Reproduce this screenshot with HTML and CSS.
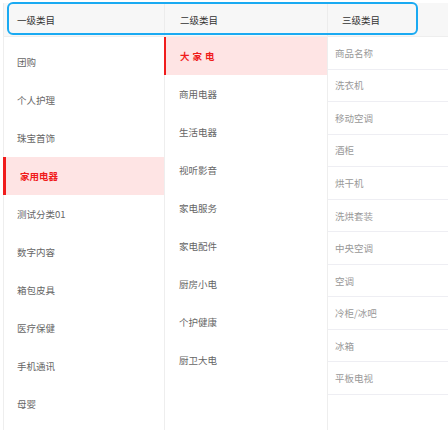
FILE: index.html
```html
<!DOCTYPE html>
<html lang="zh-CN">

<head>
  <meta charset="UTF-8">
  <meta name="viewport" content="width=device-width, initial-scale=1.0">
  <title>类目选择</title>
  <link rel="stylesheet" href="styles.css">
</head>

<body>
  <div class="picker">
    <div class="picker-head">
      <div class="head-cell first">一级类目</div>
      <div class="head-cell second">二级类目</div>
      <div class="head-cell third">三级类目</div>
    </div>

    <div class="picker-body">
      <ul class="col col-first">
        <li class="item">团购</li>
        <li class="item">个人护理</li>
        <li class="item">珠宝首饰</li>
        <li class="item active">家用电器</li>
        <li class="item">测试分类01</li>
        <li class="item">数字内容</li>
        <li class="item">箱包皮具</li>
        <li class="item">医疗保健</li>
        <li class="item">手机通讯</li>
        <li class="item">母婴</li>
      </ul>

      <ul class="col col-second">
        <li class="item active spaced">大家电</li>
        <li class="item">商用电器</li>
        <li class="item">生活电器</li>
        <li class="item">视听影音</li>
        <li class="item">家电服务</li>
        <li class="item">家电配件</li>
        <li class="item">厨房小电</li>
        <li class="item">个护健康</li>
        <li class="item">厨卫大电</li>
      </ul>

      <ul class="col col-third">
        <li class="leaf">商品名称</li>
        <li class="leaf">洗衣机</li>
        <li class="leaf">移动空调</li>
        <li class="leaf">酒柜</li>
        <li class="leaf">烘干机</li>
        <li class="leaf">洗烘套装</li>
        <li class="leaf">中央空调</li>
        <li class="leaf">空调</li>
        <li class="leaf">冷柜/冰吧</li>
        <li class="leaf">冰箱</li>
        <li class="leaf">平板电视</li>
      </ul>
    </div>
  </div>

  <div class="focus-ring"></div>
</body>

</html>
```

FILE: styles.css
```css
body {
  margin: 0;
  font-family: "Noto Sans CJK SC", "Noto Sans", sans-serif;
  font-size: 9.5px;
  color: #666;
  background: #fff;
  height: 430px;
  overflow: hidden;
  position: relative;
}

ul {
  list-style: none;
  margin: 0;
  padding: 0;
}

.picker {
  margin: 3px 0 0 3px;
  height: 427px;
  display: flex;
  flex-direction: column;
}

.picker-head,
.picker-body {
  display: grid;
  grid-template-columns: 162px 163px 1fr;
}

.picker-head {
  height: 33px;
  background: #f7f7f7;
  border-bottom: 1px solid #eee;
  color: #333;
}

.head-cell {
  display: flex;
  align-items: center;
  border-right: 1px solid #ececec;
}

.head-cell.first {
  padding-left: 13px;
  border-left: 1px solid #ececec;
}

.head-cell.second {
  padding-left: 15px;
}

.head-cell.third {
  padding-left: 14px;
  border-right: none;
}

.picker-body {
  flex: 1;
}

.col {
  border-right: 1px solid #eee;
}

.col-first {
  padding-top: 5.5px;
  border-left: 1px solid #eee;
}

.col-third {
  border-right: none;
  color: #999;
}

.item {
  height: 38px;
  display: flex;
  align-items: center;
  padding-left: 13px;
}

.col-second .item {
  padding-left: 14px;
}

.item.active {
  background: #fee4e4;
  color: #f01c1c;
  font-weight: bold;
  border-left: 3px solid #f01c1c;
  margin-left: -1px;
  padding-left: 14px;
}

.col-second .item.active {
  border-left-width: 2px;
  padding-left: 14px;
}

.spaced {
  letter-spacing: 3px;
}

.leaf {
  height: 32.56px;
  box-sizing: border-box;
  display: flex;
  align-items: center;
  padding-left: 7px;
  border-bottom: 1px solid #eeeef3;
}

.focus-ring {
  position: absolute;
  left: 7px;
  top: 2px;
  width: 411px;
  height: 33px;
  box-sizing: border-box;
  border: 2.5px solid #1aaaf2;
  border-radius: 6px;
}
```
